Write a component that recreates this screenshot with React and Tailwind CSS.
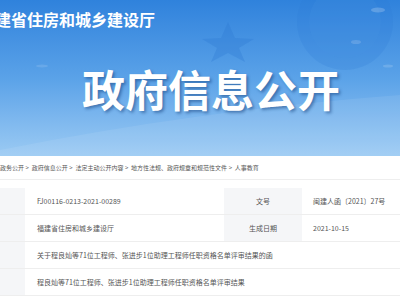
import React from 'react';

// 信息公开详情页 — header banner + breadcrumb + meta table
const CRUMBS = ['政务公开', '政府信息公开', '法定主动公开内容', '地方性法规、政府规章和规范性文件', '人事教育'];

const Banner = () => (
  <header className="relative h-[156px] overflow-hidden bg-linear-to-b from-[#2f82dc] via-[#5aa2e8] to-[#9bcaf3]">
    {/* faint decoration: star + emblem ring */}
    <svg className="absolute left-0 top-0" width="400" height="156" viewBox="0 0 400 156">
      <polygon points="228,22 235,38 254,39 239,48 245,62 228,53 211,62 217,48 202,39 221,38" fill="#2a76cf" opacity="0.3" />
      <circle cx="345" cy="22" r="48" fill="#2c7bd6" opacity="0.22" />
      <circle cx="345" cy="22" r="36" fill="#4a95e3" opacity="0.18" />
      <ellipse cx="378" cy="10" rx="7" ry="2.5" fill="#ffffff" opacity="0.2" />
      <ellipse cx="356" cy="42" rx="5" ry="2" fill="#ffffff" opacity="0.15" />
      <ellipse cx="388" cy="66" rx="5" ry="1.5" fill="#ffffff" opacity="0.15" />
      <ellipse cx="42" cy="66" rx="6" ry="1.5" fill="#ffffff" opacity="0.12" />
      <path d="M0 150 Q200 110 400 95 L400 156 L0 156 Z" fill="#ffffff" opacity="0.08" />
    </svg>
    <div className="relative pt-[11px] -ml-[21px] whitespace-nowrap text-[16px] leading-none font-bold text-white [font-family:'Noto_Sans_CJK_SC',sans-serif]">
      福建省住房和城乡建设厅
    </div>
    <div className="relative mt-[40px] ml-[82px] whitespace-nowrap text-[43px] leading-none font-bold text-white [font-family:'Noto_Sans_CJK_SC',sans-serif] [text-shadow:2px_2px_3px_rgba(10,50,110,0.45)]">
      政府信息公开
    </div>
  </header>
);

const Cell = ({ children, className = '' }) => (
  <div className={`flex items-center px-[12px] ${className}`}>{children}</div>
);

const App = () => {
  return (
    <div className="w-[400px] h-[300px] overflow-hidden bg-white [font-family:'Noto_Sans_CJK_SC',sans-serif]">
      <Banner />

      {/* breadcrumb */}
      <nav className="h-[24px] flex items-center whitespace-nowrap text-[6px] text-[#555] border-b border-[#eeeeee]">
        {CRUMBS.map((c, i) => (
          <span key={c}>
            {i > 0 && <span className="px-[1.5px]"> &gt; </span>}
            {c}
          </span>
        ))}
      </nav>

      {/* meta table */}
      <div className="mt-[8px] text-[7px] text-[#555] whitespace-nowrap">
        <div className="flex h-[27px] border-b border-[#eeeeee]">
          <div className="w-[25px] bg-[#f5f6f8]" />
          <Cell className="w-[199px]">FJ00116-0213-2021-00289</Cell>
          <div className="w-[78px] bg-[#f5f6f8] flex items-center justify-center">文号</div>
          <Cell className="flex-1 !px-[11px]">闽建人函〔2021〕27号</Cell>
        </div>
        <div className="flex h-[27px] border-b border-[#eeeeee]">
          <div className="w-[25px] bg-[#f5f6f8]" />
          <Cell className="w-[199px]">福建省住房和城乡建设厅</Cell>
          <div className="w-[78px] bg-[#f5f6f8] flex items-center justify-center">生成日期</div>
          <Cell className="flex-1 !px-[11px]">2021-10-15</Cell>
        </div>
        <div className="flex h-[27px] border-b border-[#eeeeee]">
          <div className="w-[25px] bg-[#f5f6f8]" />
          <Cell className="flex-1">关于程良灿等71位工程师、张进步1位助理工程师任职资格名单评审结果的函</Cell>
        </div>
        <div className="flex h-[27px] border-b border-[#eeeeee]">
          <div className="w-[25px] bg-[#f5f6f8]" />
          <Cell className="flex-1">程良灿等71位工程师、张进步1位助理工程师任职资格名单评审结果</Cell>
        </div>
      </div>
    </div>
  );
};

export default App;
